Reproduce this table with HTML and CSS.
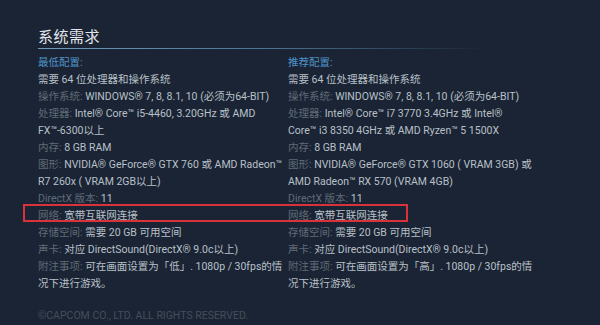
FILE: index.html
```html
<!DOCTYPE html>
<html lang="zh-CN">
<head>
<meta charset="utf-8">
<link rel="stylesheet" href="styles.css">
</head>
<body>
<div class="page">
  <h2 class="title">系统需求</h2>
  <div class="cols">
    <div class="col">
      <div class="head">最低配置:</div>
      <div class="row">需要 64 位处理器和操作系统</div>
      <div class="row"><span class="lbl">操作系统:</span> WINDOWS® 7, 8, 8.1, 10 (必须为64-BIT)</div>
      <div class="row"><span class="lbl">处理器:</span> Intel® Core™ i5-4460, 3.20GHz 或 AMD FX™-6300以上</div>
      <div class="row"><span class="lbl">内存:</span> 8 GB RAM</div>
      <div class="row"><span class="lbl">图形:</span> NVIDIA® GeForce® GTX 760 或 AMD Radeon™ R7 260x ( VRAM 2GB以上)</div>
      <div class="row"><span class="lbl">DirectX 版本:</span> 11</div>
      <div class="row"><span class="lbl">网络:</span> 宽带互联网连接</div>
      <div class="row"><span class="lbl">存储空间:</span> 需要 20 GB 可用空间</div>
      <div class="row"><span class="lbl">声卡:</span> 对应 DirectSound(DirectX® 9.0c以上)</div>
      <div class="row"><span class="lbl">附注事项:</span> 可在画面设置为「低」. 1080p / 30fps的情况下进行游戏。</div>
    </div>
    <div class="col">
      <div class="head">推荐配置:</div>
      <div class="row">需要 64 位处理器和操作系统</div>
      <div class="row"><span class="lbl">操作系统:</span> WINDOWS® 7, 8, 8.1, 10 (必须为64-BIT)</div>
      <div class="row"><span class="lbl">处理器:</span> Intel® Core™ i7 3770 3.4GHz 或 Intel®<br>Core™ i3 8350 4GHz 或 AMD Ryzen™ 5 1500X</div>
      <div class="row"><span class="lbl">内存:</span> 8 GB RAM</div>
      <div class="row"><span class="lbl">图形:</span> NVIDIA® GeForce® GTX 1060 ( VRAM 3GB) 或 AMD Radeon™ RX 570 (VRAM 4GB)</div>
      <div class="row"><span class="lbl">DirectX 版本:</span> 11</div>
      <div class="row"><span class="lbl">网络:</span> 宽带互联网连接</div>
      <div class="row"><span class="lbl">存储空间:</span> 需要 20 GB 可用空间</div>
      <div class="row"><span class="lbl">声卡:</span> 对应 DirectSound(DirectX® 9.0c以上)</div>
      <div class="row"><span class="lbl">附注事项:</span> 可在画面设置为「高」. 1080p / 30fps的情况下进行游戏。</div>
    </div>
    <div class="mark"></div>
  </div>
  <div class="copy">©CAPCOM CO., LTD. ALL RIGHTS RESERVED.</div>
</div>
</body>
</html>
```
FILE: styles.css
```css
html, body {
  margin: 0;
  padding: 0;
  background: #1b2434;
  height: 100%;
}
.page {
  padding: 27px 38px 0 38px;
  font-family: Roboto, "Noto Sans CJK SC", sans-serif;
  font-size: 10.5px;
  color: #b8c0c8;
}
.title {
  margin: 0;
  font-weight: normal;
  font-size: 15px;
  line-height: 20px;
  color: #e2e6ea;
  letter-spacing: 0.5px;
  padding-bottom: 1px;
  border-bottom: 1px solid transparent;
  border-image: linear-gradient(to right, #6f9cba 0%, #4a7290 45%, rgba(60, 95, 120, 0.35) 75%, rgba(60, 95, 120, 0) 85%) 1;
  width: 524px;
}
.cols {
  position: relative;
  display: grid;
  grid-template-columns: 246px 248px;
  column-gap: 4px;
  margin-top: 5px;
}
.head {
  color: #4e93c8;
  line-height: 17px;
}
.row {
  line-height: 17px;
}
.lbl {
  color: #5f6b77;
}
.mark {
  position: absolute;
  left: -15px;
  top: 150px;
  width: 381px;
  height: 14px;
  border: 2px solid #d9333a;
  pointer-events: none;
}
.copy {
  margin-top: 17px;
  color: #434e5b;
  font-size: 10.5px;
  line-height: 14px;
}
```
